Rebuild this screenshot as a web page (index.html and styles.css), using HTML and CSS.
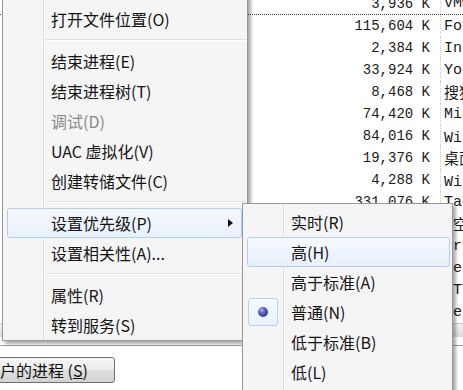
FILE: index.html
```html
<!DOCTYPE html>
<html lang="zh-CN">
<head>
<meta charset="utf-8">
<title>任务管理器</title>
<link rel="stylesheet" href="styles.css">
</head>
<body>
<div class="screen">
  <div class="window">
    <div class="listwrap">
      <div class="list">
        <div class="row focus"><span class="mem">3,936 K</span><span class="desc">VMware Tools Core Service</span></div>
        <div class="row"><span class="mem">115,604 K</span><span class="desc">Foxit Reader</span></div>
        <div class="row"><span class="mem">2,384 K</span><span class="desc">Internet Explorer</span></div>
        <div class="row"><span class="mem">33,924 K</span><span class="desc">YoudaoDict</span></div>
        <div class="row"><span class="mem">8,468 K</span><span class="desc">搜狗输入法</span></div>
        <div class="row"><span class="mem">74,420 K</span><span class="desc">Microsoft Office Word</span></div>
        <div class="row"><span class="mem">84,016 K</span><span class="desc">Windows 资源管理器</span></div>
        <div class="row"><span class="mem">19,376 K</span><span class="desc">桌面窗口管理器</span></div>
        <div class="row"><span class="mem">4,288 K</span><span class="desc">Windows 任务管理器</span></div>
        <div class="row"><span class="mem">331,076 K</span><span class="desc">TaobaoProtect</span></div>
        <div class="row"><span class="mem">1,652 K</span><span class="desc">Q空间</span></div>
        <div class="row"><span class="mem">2,040 K</span><span class="desc">:rvice Host</span></div>
        <div class="row"><span class="mem">6,112 K</span><span class="desc">Se</span></div>
        <div class="row"><span class="mem">3,208 K</span><span class="desc">HTTP</span></div>
        <div class="row"><span class="mem">1,504 K</span><span class="desc">Ie</span></div>
      </div>
      <div class="hbar"></div>
    </div>
    <div class="footer">
      <button class="btn">显示所有用户的进程 (<u>S</u>)</button>
    </div>
  </div>

  <div class="menu main">
    <div class="item">打开文件位置(O)</div>
    <div class="sep"></div>
    <div class="item">结束进程(E)</div>
    <div class="item">结束进程树(T)</div>
    <div class="item disabled">调试(D)</div>
    <div class="item">UAC 虚拟化(V)</div>
    <div class="item">创建转储文件(C)</div>
    <div class="sep"></div>
    <div class="item hot">设置优先级(P)<span class="arrow"></span></div>
    <div class="item">设置相关性(A)...</div>
    <div class="sep"></div>
    <div class="item">属性(R)</div>
    <div class="item">转到服务(S)</div>
  </div>

  <div class="menu sub">
    <div class="item">实时(R)</div>
    <div class="item hot">高(H)</div>
    <div class="item">高于标准(A)</div>
    <div class="item checked"><span class="check"><span class="dot"></span></span>普通(N)</div>
    <div class="item">低于标准(B)</div>
    <div class="item">低(L)</div>
    <div class="item">&nbsp;</div>
  </div>
</div>
</body>
</html>
```

FILE: styles.css
```css
html, body {
  margin: 0;
  padding: 0;
}

body {
  background: #ffffff;
  font-family: "Noto Sans CJK SC", "Noto Sans", sans-serif;
}

.screen {
  position: relative;
  width: 463px;
  height: 390px;
  overflow: hidden;
  background: #ffffff;
}

/* background task manager window */
.window {
  position: absolute;
  left: 0;
  top: -7px;
  width: 463px;
}

.listwrap {
  padding-bottom: 8px;
  border-bottom: 1px solid #a0a0a0;
}

.list {
  display: flex;
  flex-direction: column;
}

.row {
  display: flex;
  align-items: center;
  height: 22px;
  font-family: "Liberation Mono", "Noto Sans CJK SC", monospace;
  font-size: 14px;
  color: #1a1a1a;
  white-space: nowrap;
}

.row.focus {
  height: 21px;
  border-bottom: 1px dotted #444;
}

.mem {
  width: 430px;
  flex: none;
  text-align: right;
}

.desc {
  margin-left: 10px;
  padding-left: 3px;
  height: 100%;
  display: flex;
  align-items: center;
  font-size: 15px;
  border-left: 1px dotted #cfcfcf;
}

.hbar {
  height: 14px;
  background: linear-gradient(#f4f4f4, #d9d9d9);
  border-top: 1px solid #c6c6c6;
  box-sizing: border-box;
}

.footer {
  padding-top: 11px;
}

.btn {
  display: block;
  margin-left: -107px;
  width: 222px;
  height: 26px;
  padding: 0;
  border: 1px solid #707070;
  border-radius: 3px;
  background: linear-gradient(#f6f6f6 0%, #ececec 48%, #dedede 52%, #d2d2d2 100%);
  font-family: "Noto Sans CJK SC", sans-serif;
  font-size: 16px;
  line-height: 22px;
  color: #111;
}

.btn u {
  text-decoration: underline;
}

/* context menus */
.menu {
  position: absolute;
  box-sizing: border-box;
  border: 1px solid #979797;
  background:
    linear-gradient(to right, transparent 40px, #e0e0e0 40px, #e0e0e0 41px, #ffffff 41px, #ffffff 42px, transparent 42px),
    #f5f5f5;
  box-shadow: 3px 3px 3px rgba(0, 0, 0, 0.32);
  display: flex;
  flex-direction: column;
}

.menu.main {
  left: 2px;
  top: -10px;
  width: 246px;
  padding: 13px 5px 0 4px;
}

.menu.sub {
  left: 242px;
  top: 203px;
  width: 211px;
  padding: 3px 2px 0 4px;
}

.item {
  display: flex;
  align-items: center;
  box-sizing: border-box;
  height: 30px;
  padding-left: 43px;
  font-size: 16px;
  line-height: 20px;
  color: #141414;
  white-space: nowrap;
  border: 1px solid transparent;
  border-radius: 3px;
}

.item.hot {
  border-color: #afcff2;
  background: linear-gradient(#f6f9fe, #e7f0fb);
}

.item.disabled {
  color: #8a8a8a;
}

.sep {
  height: 12px;
  margin-left: 38px;
  margin-right: -4px;
  background: linear-gradient(transparent 5px, #e0e0e0 5px, #e0e0e0 6px, #ffffff 6px, #ffffff 7px, transparent 7px);
}

.arrow {
  margin-left: auto;
  margin-right: 8px;
  width: 0;
  height: 0;
  border-left: 5px solid #111;
  border-top: 4px solid transparent;
  border-bottom: 4px solid transparent;
}

.item.checked {
  padding-left: 0;
}

.check {
  display: flex;
  align-items: center;
  justify-content: center;
  box-sizing: border-box;
  width: 30px;
  height: 28px;
  margin-right: 13px;
  border: 1px solid #b3d2f4;
  border-radius: 3px;
  background: linear-gradient(#f7fafe, #e9f1fb);
}

.dot {
  width: 10px;
  height: 10px;
  border-radius: 50%;
  background: radial-gradient(circle at 38% 32%, #b4b6f0 0, #5a5cc0 35%, #26287a 100%);
}
```
